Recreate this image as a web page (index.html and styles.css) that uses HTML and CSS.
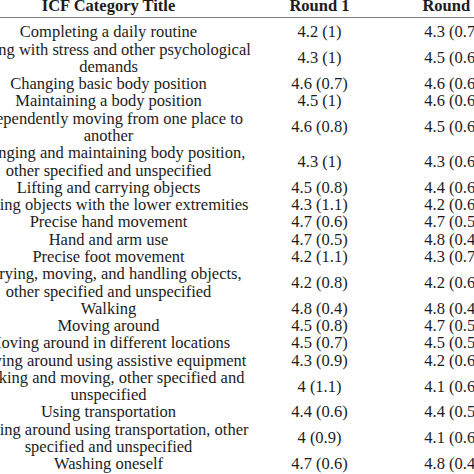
FILE: index.html
```html
<!DOCTYPE html>
<html>
<head>
<meta charset="utf-8">
<link rel="stylesheet" href="styles.css">
</head>
<body>
<table class="icf">
  <colgroup>
    <col class="c-title">
    <col class="c-round">
    <col class="c-round">
  </colgroup>
  <thead>
    <tr><th>ICF Category Title</th><th>Round 1</th><th>Round 2</th></tr>
  </thead>
  <tbody>
    <tr class="first"><td>Completing a daily routine</td><td>4.2 (1)</td><td>4.3 (0.7)</td></tr>
    <tr><td>Coping with stress and other psychological<br>demands</td><td>4.3 (1)</td><td>4.5 (0.6)</td></tr>
    <tr><td>Changing basic body position</td><td>4.6 (0.7)</td><td>4.6 (0.6)</td></tr>
    <tr><td>Maintaining a body position</td><td>4.5 (1)</td><td>4.6 (0.6)</td></tr>
    <tr><td>Independently moving from one place to<br>another</td><td>4.6 (0.8)</td><td>4.5 (0.6)</td></tr>
    <tr><td>Changing and maintaining body position,<br>other specified and unspecified</td><td>4.3 (1)</td><td>4.3 (0.6)</td></tr>
    <tr><td>Lifting and carrying objects</td><td>4.5 (0.8)</td><td>4.4 (0.6)</td></tr>
    <tr><td>Moving objects with the lower extremities</td><td>4.3 (1.1)</td><td>4.2 (0.6)</td></tr>
    <tr><td>Precise hand movement</td><td>4.7 (0.6)</td><td>4.7 (0.5)</td></tr>
    <tr><td>Hand and arm use</td><td>4.7 (0.5)</td><td>4.8 (0.4)</td></tr>
    <tr><td>Precise foot movement</td><td>4.2 (1.1)</td><td>4.3 (0.7)</td></tr>
    <tr><td>Carrying, moving, and handling objects,<br>other specified and unspecified</td><td>4.2 (0.8)</td><td>4.2 (0.6)</td></tr>
    <tr><td>Walking</td><td>4.8 (0.4)</td><td>4.8 (0.4)</td></tr>
    <tr><td>Moving around</td><td>4.5 (0.8)</td><td>4.7 (0.5)</td></tr>
    <tr><td>Moving around in different locations</td><td>4.5 (0.7)</td><td>4.5 (0.5)</td></tr>
    <tr><td>Moving around using assistive equipment</td><td>4.3 (0.9)</td><td>4.2 (0.6)</td></tr>
    <tr><td>Walking and moving, other specified and<br>unspecified</td><td>4 (1.1)</td><td>4.1 (0.6)</td></tr>
    <tr><td>Using transportation</td><td>4.4 (0.6)</td><td>4.4 (0.5)</td></tr>
    <tr><td>Moving around using transportation, other<br>specified and unspecified</td><td>4 (0.9)</td><td>4.1 (0.6)</td></tr>
    <tr><td>Washing oneself</td><td>4.7 (0.6)</td><td>4.8 (0.4)</td></tr>
  </tbody>
</table>
</body>
</html>
```
FILE: styles.css
```css
html, body {
  margin: 0;
  padding: 0;
  background: #ffffff;
  overflow: hidden;
}

.icf {
  border-collapse: collapse;
  table-layout: fixed;
  width: 555px;
  margin: -3px 0 0 -36px;
  font-family: "Liberation Serif", "Times New Roman", serif;
  font-size: 16.5px;
  line-height: 17.28px;
  color: #1c1c1c;
  white-space: nowrap;
}

.c-title { width: 289px; }
.c-round { width: 133px; }

.icf th,
.icf td {
  padding: 0;
  text-align: center;
  vertical-align: middle;
}

.icf th {
  font-weight: bold;
  padding-bottom: 3px;
  border-bottom: 1px solid #7a7a7a;
}

.icf tr.first td {
  padding-top: 5px;
}
```
